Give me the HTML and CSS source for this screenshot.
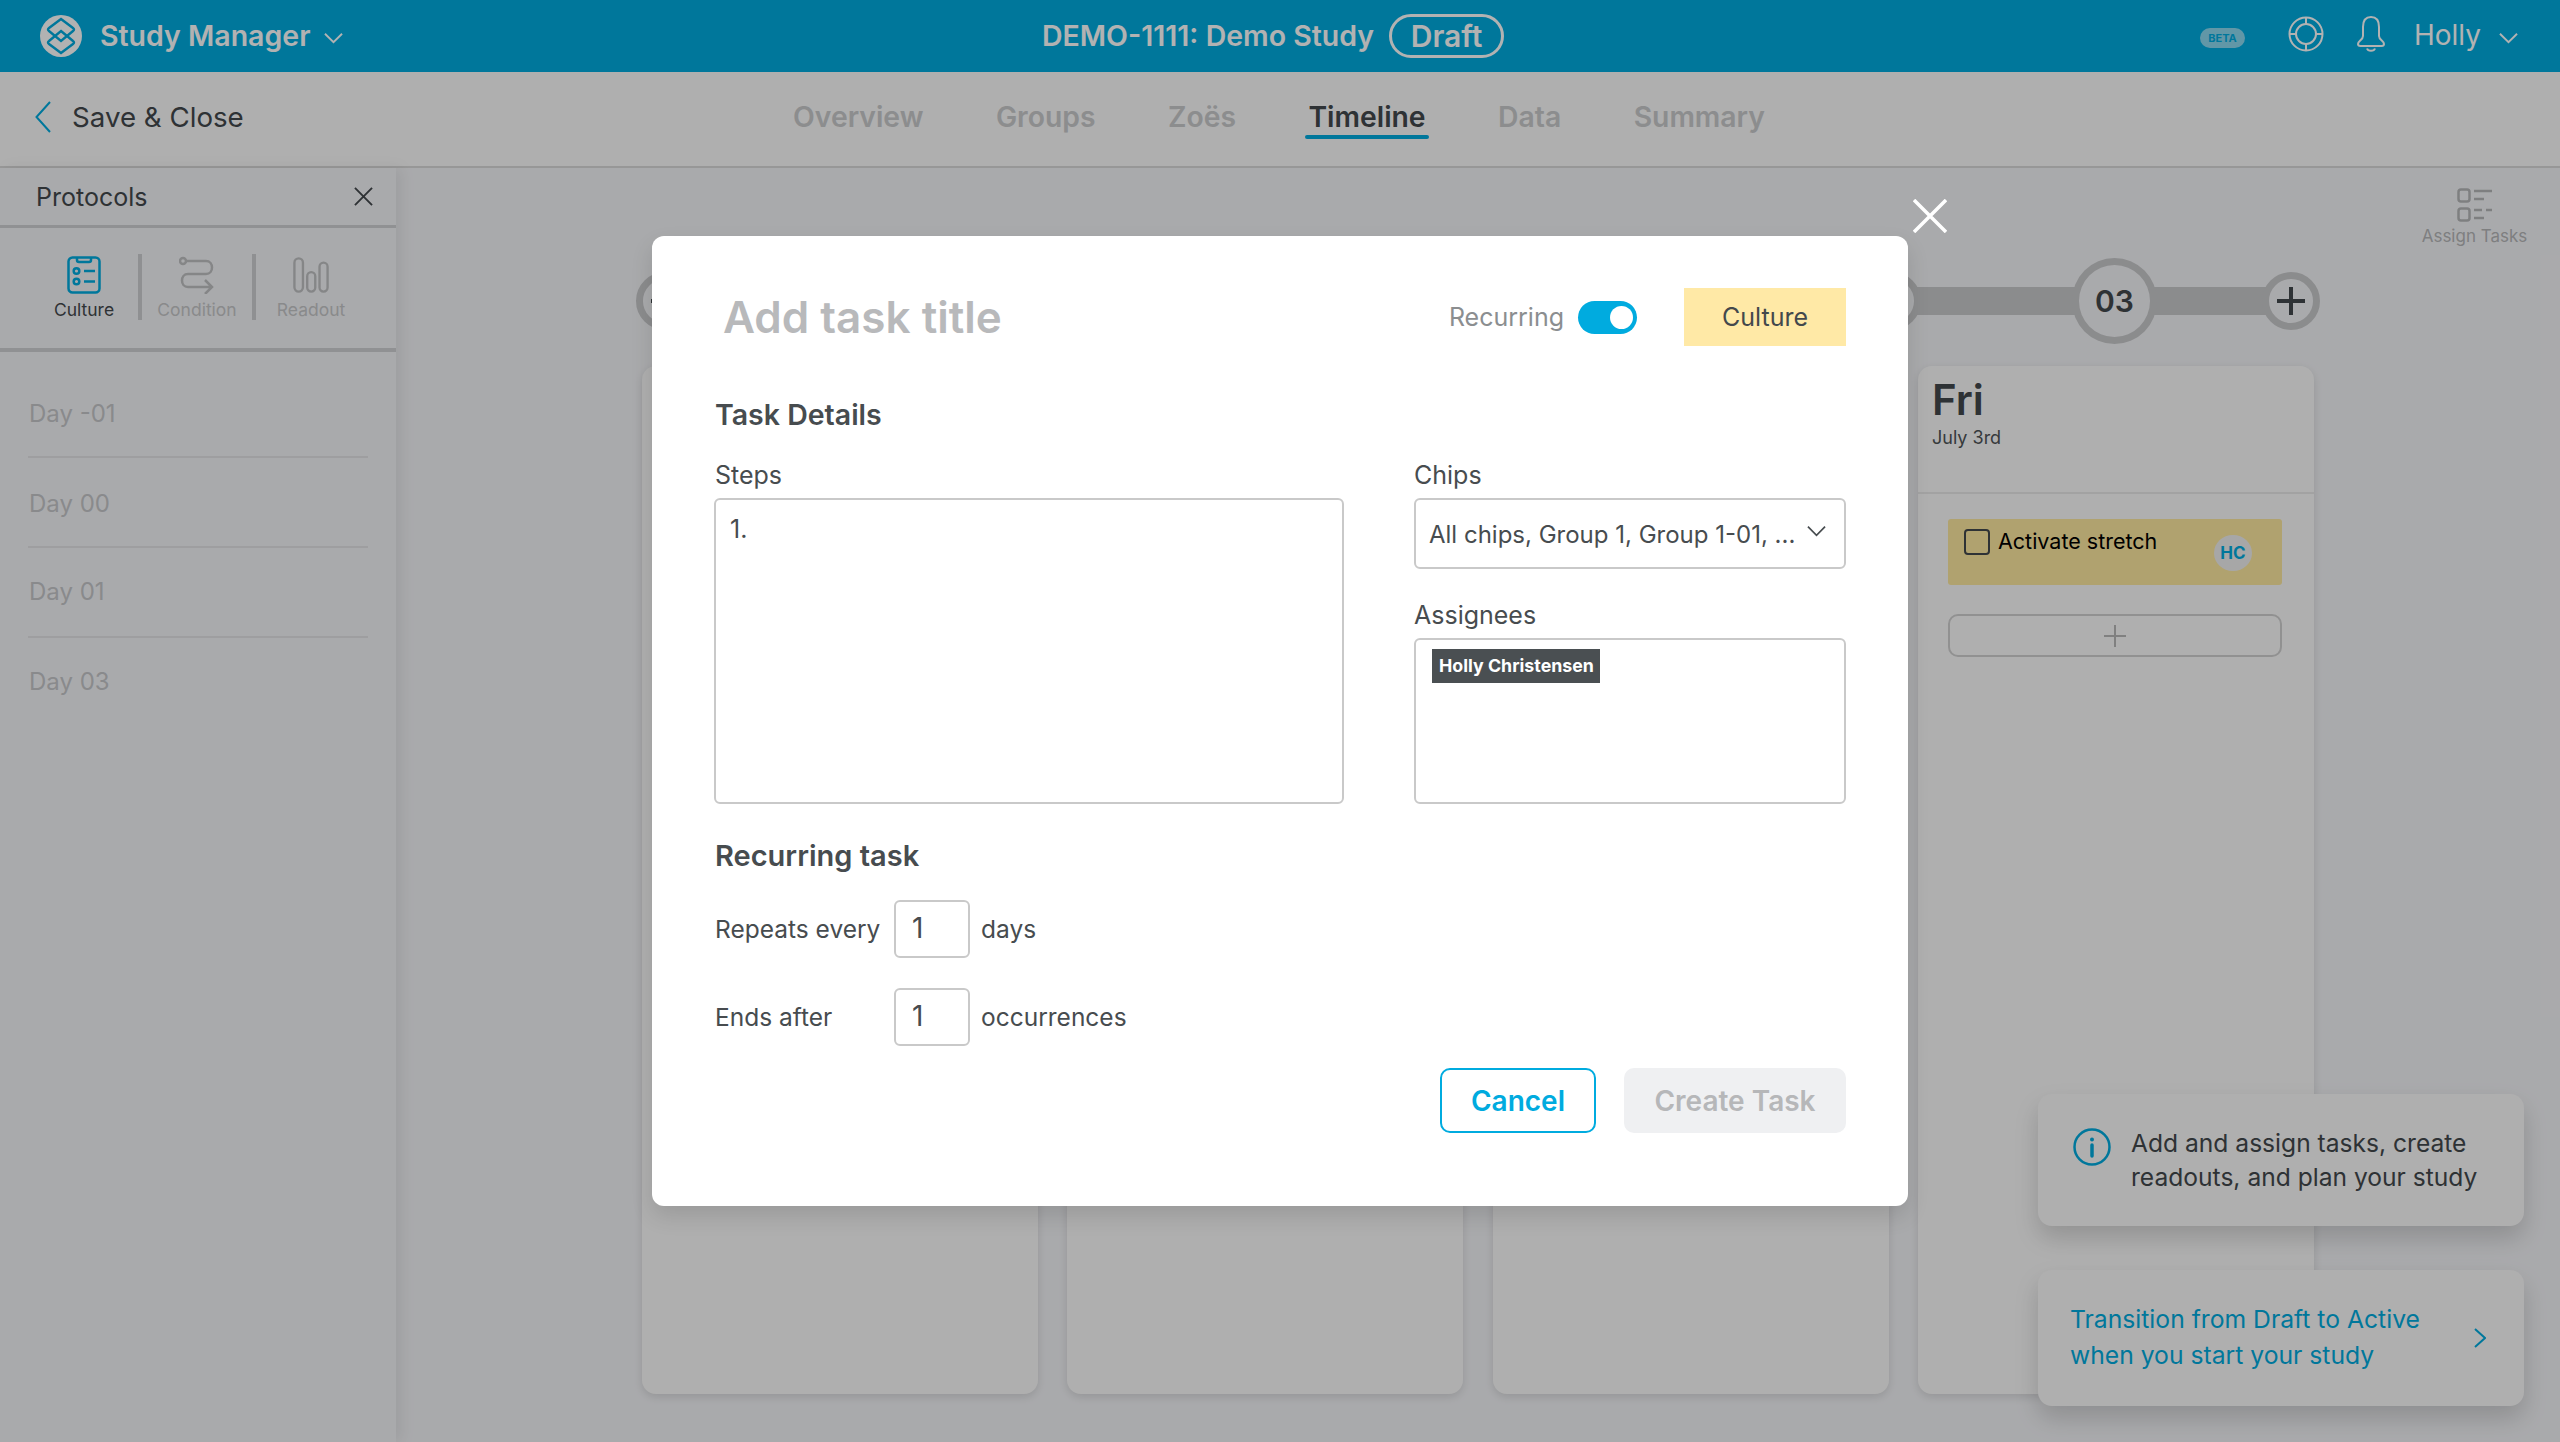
FILE: index.html
```html
<!DOCTYPE html>
<html lang="en">
<head>
<meta charset="utf-8">
<title>Study Manager</title>
<link rel="stylesheet" href="styles.css">
</head>
<body>
<div class="app">
  <header class="topbar">
    <div class="brand">
      <svg class="logo" viewBox="0 0 42 42"><circle cx="21" cy="21" r="21" fill="#fff"/><g fill="none" stroke="#00abdf" stroke-width="2.400"><path d="M21 4 L33 13 Q35 14.500 33 16 L21 26 L9 16 Q7 14.500 9 13 Z"/><path d="M21 16 L33 26 Q35 27.500 33 29 L21 38 L9 29 Q7 27.500 9 26 Z"/></g></svg>
      <span class="brand-name">Study Manager</span>
      <svg class="chev" viewBox="0 0 20 12"><path d="M1 1.5 L10 10.5 L19 1.5"/></svg>
    </div>
    <div class="study">
      <span class="study-name">DEMO-1111: Demo Study</span>
      <span class="pill">Draft</span>
    </div>
    <div class="tools">
      <span class="beta">BETA</span>
      <svg class="ico-help" viewBox="0 0 36 36"><g fill="none" stroke="#fff" stroke-width="2"><circle cx="18" cy="18" r="16.5"/><circle cx="18" cy="18" r="10"/><path d="M18 1.5V8M18 28V34.500M1.500 18H8M28 18H34.500"/></g></svg>
      <svg class="ico-bell" viewBox="0 0 28 36"><g fill="none" stroke="#fff" stroke-width="2"><path d="M14 1C8 1 6 6 6 11V20C6 24 1 25 1 28C1 29.500 2 30 3.500 30H24.500C26 30 27 29.500 27 28C27 25 22 24 22 20V11C22 6 20 1 14 1Z"/><path d="M10 32.500C11 35.500 17 35.500 18 32.500"/></g></svg>
      <span class="user">Holly</span>
      <svg class="chev" viewBox="0 0 20 12"><path d="M1 1.5 L10 10.5 L19 1.500"/></svg>
    </div>
  </header>

  <nav class="subnav">
    <div class="back">
      <svg class="back-ico" viewBox="0 0 16 32"><path d="M15 1 L1.500 16 L15 31"/></svg>
      <span>Save &amp; Close</span>
    </div>
    <div class="tabs">
      <span class="tab">Overview</span>
      <span class="tab">Groups</span>
      <span class="tab">Zoës</span>
      <span class="tab tab-on">Timeline</span>
      <span class="tab">Data</span>
      <span class="tab">Summary</span>
    </div>
  </nav>

  <div class="work">
    <aside class="side">
      <div class="side-head">
        <span>Protocols</span>
        <svg class="side-x" viewBox="0 0 20 20"><path d="M1 1L19 19M19 1L1 19"/></svg>
      </div>
      <div class="side-tabs">
        <div class="stab stab-on">
          <svg class="stab-ico" viewBox="0 0 34 38"><g fill="none" stroke="#00abdf" stroke-width="2.500"><rect x="1.500" y="1.500" width="31" height="35" rx="4"/><path d="M10 1.500V4C10 5.500 11 6 12 6H22C23 6 24 5.500 24 4V1.500"/><circle cx="9.500" cy="15" r="2.800"/><circle cx="9.500" cy="25.500" r="2.800"/><path d="M17 15H28M17 25.500H28"/></g></svg>
          <span>Culture</span>
        </div>
        <div class="stab">
          <svg class="stab-ico" viewBox="0 0 36 38"><g fill="none" stroke="#bfc0c2" stroke-width="2.500"><circle cx="4" cy="5" r="3"/><path d="M7 5H27C35 5 35 18 27 18H9C1 18 1 31 9 31H33M26 24L33 31L26 38"/></g></svg>
          <span>Condition</span>
        </div>
        <div class="stab">
          <svg class="stab-ico" viewBox="0 0 38 38"><g fill="none" stroke="#bfc0c2" stroke-width="2.500"><rect x="1.500" y="1.500" width="9" height="35" rx="4.500"/><rect x="15" y="16" width="8.500" height="20.500" rx="4.200"/><rect x="28" y="6" width="8.500" height="30.500" rx="4.200"/></g></svg>
          <span>Readout</span>
        </div>
      </div>
      <ul class="days">
        <li>Day -01</li>
        <li>Day 00</li>
        <li>Day 01</li>
        <li>Day 03</li>
      </ul>
    </aside>

    <main class="canvas">
      <div class="board">
        <div class="rail">
          <span class="node node-add"><svg class="plus" viewBox="0 0 28 28"><path d="M14 0V28M0 14H28"/></svg></span>
          <span class="seg seg-long"></span>
          <span class="node node-add"></span>
          <span class="seg seg-a"></span>
          <span class="node node-day">03</span>
          <span class="seg seg-b"></span>
          <span class="node node-add"><svg class="plus" viewBox="0 0 28 28"><path d="M14 0V28M0 14H28"/></svg></span>
        </div>
        <div class="cols">
          <section class="col"></section>
          <section class="col"></section>
          <section class="col"></section>
          <section class="col">
            <div class="col-head">
              <div class="col-day">Fri</div>
              <div class="col-date">July 3rd</div>
            </div>
            <div class="col-body">
              <div class="task">
                <span class="check"></span>
                <span class="task-name">Activate stretch</span>
                <span class="avatar">HC</span>
              </div>
              <div class="add-task"><svg class="add-plus" viewBox="0 0 22 22"><path d="M11 0V22M0 11H22"/></svg></div>
            </div>
          </section>
        </div>
      </div>
      <div class="assign">
        <svg class="assign-ico" viewBox="0 0 36 34"><g fill="none" stroke="#b5b6b8" stroke-width="2.500"><rect x="1.500" y="1.500" width="11" height="12" rx="2.500"/><rect x="1.500" y="20.500" width="11" height="12" rx="2.500"/><path d="M17 3H35M17 11H27M17 22H25M29 22H35M17 30H27"/></g></svg>
        <span>Assign Tasks</span>
      </div>
    </main>
  </div>

  <div class="toast toast-info">
    <svg class="info" viewBox="0 0 38 38"><circle cx="19" cy="19" r="17.500" fill="none" stroke="#00abdf" stroke-width="2.500"/><circle cx="19" cy="11.500" r="2" fill="#00abdf"/><path d="M19 17V28" stroke="#00abdf" stroke-width="3.500" stroke-linecap="round"/></svg>
    <p>Add and assign tasks, create readouts, and plan your study</p>
  </div>
  <div class="toast toast-link">
    <p>Transition from Draft to Active when you start your study</p>
    <svg class="toast-chev" viewBox="0 0 12 20"><path d="M1 1L11 10L1 19"/></svg>
  </div>
</div>

<div class="scrim"></div>

<svg class="modal-x" viewBox="0 0 34 34"><path d="M1 1L33 33M33 1L1 33"/></svg>

<div class="modal">
  <div class="m-top">
    <h1 class="m-title">Add task title</h1>
    <span class="m-rec">Recurring</span>
    <span class="toggle"><span class="knob"></span></span>
    <span class="m-chip">Culture</span>
  </div>
  <h2 class="m-h">Task Details</h2>
  <div class="m-grid">
    <div class="f-steps">
      <label class="m-label">Steps</label>
      <div class="box box-steps">1.</div>
    </div>
    <div class="f-right">
      <label class="m-label m-label-r">Chips</label>
      <div class="box box-select">
        <span class="sel-text">All chips, Group 1, Group 1-01, ...</span>
        <svg class="sel-chev" viewBox="0 0 20 12"><path d="M1 1.500L10 10.500L19 1.500"/></svg>
      </div>
      <label class="m-label m-label-r m-label-2">Assignees</label>
      <div class="box box-assign"><span class="tag">Holly Christensen</span></div>
    </div>
  </div>
  <h2 class="m-h m-h-2">Recurring task</h2>
  <div class="rep">
    <span class="rep-label">Repeats every</span>
    <span class="num">1</span>
    <span class="rep-unit">days</span>
  </div>
  <div class="rep rep-2">
    <span class="rep-label">Ends after</span>
    <span class="num">1</span>
    <span class="rep-unit">occurrences</span>
  </div>
  <div class="m-actions">
    <button class="btn btn-cancel">Cancel</button>
    <button class="btn btn-create">Create Task</button>
  </div>
</div>
</body>
</html>
```
FILE: styles.css
```css
* { box-sizing: border-box; }
html, body { margin: 0; height: 100%; }
body { font-family: "Inter", "Noto Sans", sans-serif; color: #474c4f; overflow: hidden; width: 2560px; height: 1442px; position: relative; }
.app { width: 2560px; height: 1442px; display: flex; flex-direction: column; background: #f3f4f7; position: relative; overflow: hidden; }

.topbar { height: 72px; background: #00abdf; color: #fff; display: grid; grid-template-columns: 1fr auto 1fr; align-items: center; flex: none; }
.brand { display: flex; align-items: center; padding-left: 40px; }
.logo { width: 42px; height: 42px; }
.brand-name { font-size: 28.500px; font-weight: 600; margin: -2px 0 0 18px; }
.chev { width: 19px; height: 12px; fill: none; stroke: #fff; stroke-width: 2; }
.brand .chev { margin-left: 14px; margin-top: 3px; }
.study { display: flex; align-items: center; margin-right: 14px; }
.study-name { font-size: 28.500px; font-weight: 600; margin-top: -2px; }
.pill { margin-left: 15px; width: 115px; height: 44px; border: 3px solid #fff; border-radius: 22px; font-size: 30px; font-weight: 600; display: flex; align-items: center; justify-content: center; }
.tools { display: flex; align-items: center; justify-content: flex-end; padding-right: 42px; }
.beta { width: 45px; height: 20px; border-radius: 10px; background: #fff; opacity: .55; color: #00abdf; font-size: 11px; font-weight: 700; display: flex; align-items: center; justify-content: center; margin-top: 4px; }
.ico-help { width: 36px; height: 36px; margin-left: 43px; margin-top: -4px; }
.ico-bell { width: 28px; height: 36px; margin-left: 33px; margin-top: -4px; }
.user { font-size: 28px; margin: -2px 0 0 29px; }
.tools .chev { margin-left: 18px; margin-top: 3px; }

.subnav { height: 96px; background: #fbfbfb; border-bottom: 2px solid #d9d9d9; display: grid; grid-template-columns: 1fr auto 1fr; align-items: center; flex: none; padding-bottom: 4px; }
.back { display: flex; align-items: center; font-size: 27.700px; color: #43484c; padding-left: 35px; grid-column: 1; }
.back-ico { width: 16px; height: 32px; fill: none; stroke: #00abdf; stroke-width: 2; margin-right: 21px; }
.tabs { display: flex; gap: 72.500px; grid-column: 2; font-size: 28.300px; font-weight: 600; color: #c9cacc; align-items: center; margin-right: 2px; }
.tab { position: relative; }
.tab-on { color: #43484c; }
.tab-on::after { content: ""; position: absolute; left: -3px; right: -3px; bottom: -5px; height: 4px; background: #00abdf; border-radius: 2px; }

.work { flex: 1; display: flex; min-height: 0; }
.side { width: 396px; flex: none; box-shadow: 6px 0 14px rgba(0,0,0,.07); background: #f3f4f7; position: relative; z-index: 1; }
.side-head { height: 60px; border-bottom: 3px solid #cfd0d3; display: flex; align-items: center; justify-content: space-between; padding: 0 23px 0 36px; font-size: 25px; color: #43484c; }
.side-x { width: 19px; height: 19px; fill: none; stroke: #43484c; stroke-width: 2; }
.side-tabs { height: 124px; border-bottom: 4px solid #cfd0d3; display: grid; grid-template-columns: 138px 114px 114px; align-items: start; padding-top: 26px; }
.stab { display: flex; flex-direction: column; align-items: center; font-size: 17.500px; color: #c5c6c8; height: 66px; padding-top: 2px; gap: 5px; border-left: 4px solid #cdced1; white-space: nowrap; }
.stab:first-child { border-left: 0; padding-left: 30px; }
.stab-on { color: #43484c; }
.stab-ico { width: 36px; height: 38px; flex: none; }
.days { list-style: none; margin: 0; padding: 16px 28px 0; font-size: 24px; color: #c5c6c9; }
.days li { height: 90px; padding: 31px 0 0 1px; border-bottom: 2px solid #e2e3e6; }
.days li:nth-child(n+3) { padding-top: 29px; }
.days li:last-child { border-bottom: 0; }

.canvas { flex: 1; display: flex; justify-content: space-between; min-width: 0; }
.board { padding: 90px 0 0 240px; display: flex; flex-direction: column; }
.rail { display: flex; align-items: center; width: 1684px; height: 86px; }
.node { flex: none; border-radius: 50%; display: flex; align-items: center; justify-content: center; border: 7px solid #c8c9cb; background: #f3f4f7; position: relative; z-index: 1; }
.node-add { width: 58px; height: 58px; }
.node-day { width: 85px; height: 86px; font-size: 30px; font-weight: 600; color: #43484c; }
.plus { width: 28px; height: 28px; fill: none; stroke: #43484c; stroke-width: 4; }
.seg { height: 28px; background: #c8c9cb; flex: none; margin: 0 -12px; }
.seg-long { width: 1193px; }
.seg-a { width: 175px; }
.seg-b { width: 129px; }
.cols { display: flex; gap: 29.330px; margin: 22px 0 0 6px; }
.col { width: 396px; height: 1028px; background: #fbfbfb; border-radius: 14px; box-shadow: 0 3px 10px rgba(0,0,0,.12); flex: none; }
.col-head { height: 128px; border-bottom: 2px solid #e9e9e9; padding: 8px 14px 0; }
.col-day { font-size: 42px; font-weight: 600; color: #43484c; line-height: 52px; }
.col-date { font-size: 18px; color: #4e5357; line-height: 24px; }
.col-body { padding: 25px 32px 25px 30px; }
.task { height: 66px; background: #fde89f; border-radius: 3px; display: flex; align-items: flex-start; padding: 10px 30px 0 16px; color: #000; }
.check { width: 26px; height: 26px; border: 2px solid #43484c; border-radius: 4px; flex: none; }
.task-name { font-size: 21.500px; margin-left: 8px; line-height: 24px; }
.avatar { margin-left: auto; margin-top: 6px; width: 38px; height: 36px; border-radius: 50%; background: #f0f0f0; color: #00abdf; font-size: 17px; font-weight: 700; display: flex; align-items: center; justify-content: center; }
.add-task { margin-top: 29px; height: 43px; border: 2px solid #d0d0d0; border-radius: 10px; display: flex; align-items: center; justify-content: center; }
.add-plus { width: 22px; height: 22px; fill: none; stroke: #b8b8b8; stroke-width: 2; }
.assign { width: 139px; padding-top: 20px; display: flex; flex-direction: column; align-items: center; font-size: 17px; color: #b5b6b8; padding-right: 32px; white-space: nowrap; }
.assign-ico { width: 36px; height: 34px; margin-bottom: 4px; }

.toast { position: absolute; left: 2038px; width: 486px; background: #fbfbfb; border-radius: 14px; box-shadow: 0 12px 24px rgba(0,0,0,.16); display: flex; z-index: 2; }
.toast p { margin: 0; }
.toast-info { top: 1094px; height: 132px; padding: 32px 20px 0 35px; font-size: 24.600px; line-height: 34px; color: #43484c; }
.info { width: 38px; height: 38px; flex: none; margin: 2px 20px 0 0; }
.toast-link { top: 1270px; height: 136px; padding: 31px 38px 0 32px; font-size: 24.700px; line-height: 36px; color: #00abdf; justify-content: space-between; }
.toast-link p { width: 365px; }
.toast-chev { width: 12px; height: 20px; fill: none; stroke: #00abdf; stroke-width: 2; margin-top: 27px; }

.scrim { position: absolute; inset: 0; background: rgba(0,0,0,.3); z-index: 5; }
.modal-x { position: absolute; left: 1913px; top: 199px; width: 34px; height: 34px; fill: none; stroke: #fff; stroke-width: 3.500; z-index: 6; }

.modal { position: absolute; left: 652px; top: 236px; width: 1256px; height: 970px; background: #fff; border-radius: 12px; z-index: 6; padding: 52px 62px 0 62px; box-shadow: 0 10px 22px rgba(0,0,0,.12); }
.m-top { display: flex; align-items: center; height: 58px; }
.m-title { margin: 0 auto 0 9px; font-size: 44px; font-weight: 600; color: #b8b9bb; }
.m-rec { font-size: 25px; color: #8b8e90; }
.toggle { width: 59px; height: 33px; border-radius: 17px; background: #00abdf; margin-left: 14px; position: relative; display: block; }
.knob { position: absolute; right: 4px; top: 5px; width: 23px; height: 23px; border-radius: 50%; background: #fff; }
.m-chip { margin-left: 47px; width: 162px; height: 58px; background: #ffe9a6; display: flex; align-items: center; justify-content: center; font-size: 25px; color: #43484c; }
.m-h { margin: 0; padding-left: 1px; font-size: 28.500px; font-weight: 600; color: #474c4f; line-height: 34px; }
.m-top + .m-h { margin-top: 52px; }
.m-grid { display: grid; grid-template-columns: 630px 432px; column-gap: 70px; margin-top: 28px; }
.m-label { display: block; padding-left: 1px; font-size: 25px; line-height: 30px; color: #474c4f; margin-bottom: 8px; }
.m-label-r { padding-left: 0; }
.m-label-2 { margin-top: 31px; }
.box { border: 2px solid #c9c9c9; border-radius: 6px; background: #fff; font-size: 25px; color: #474c4f; }
.box-steps { height: 306px; padding: 14px 14px; }
.box-select { height: 71px; display: flex; align-items: center; justify-content: space-between; padding: 0 18px 0 13px; white-space: nowrap; }
.sel-text { font-size: 24px; margin-top: 2px; }
.sel-chev { width: 19px; height: 12px; fill: none; stroke: #474c4f; stroke-width: 1.800; margin-top: -5px; }
.box-assign { height: 166px; padding: 8px 16px; }
.tag { display: inline-flex; align-items: center; height: 34px; padding: 0 7px; background: #4a4f52; color: #fff; font-size: 17.800px; font-weight: 700; width: 168px; white-space: nowrap; }
.m-h-2 { margin-top: 35px; font-size: 29px; }
.rep { display: flex; align-items: center; font-size: 24.500px; margin-top: 27px; height: 58px; }
.rep-2 { margin-top: 30px; }
.rep-label { width: 180px; padding-left: 1px; }
.num { width: 76px; height: 58px; border: 2px solid #c9c9c9; border-radius: 6px; font-size: 28px; padding: 0 0 2px 16px; display: flex; align-items: center; }
.rep-unit { margin-left: 11px; }
.m-actions { display: flex; justify-content: flex-end; gap: 28px; margin-top: 22px; }
.btn { height: 65px; border-radius: 10px; font-family: inherit; font-size: 28px; font-weight: 600; }
.btn-cancel { width: 156px; background: #fff; border: 2px solid #00abdf; color: #00abdf; }
.btn-create { width: 222px; background: #eff0f2; border: 0; color: #b6b7b9; }
```
